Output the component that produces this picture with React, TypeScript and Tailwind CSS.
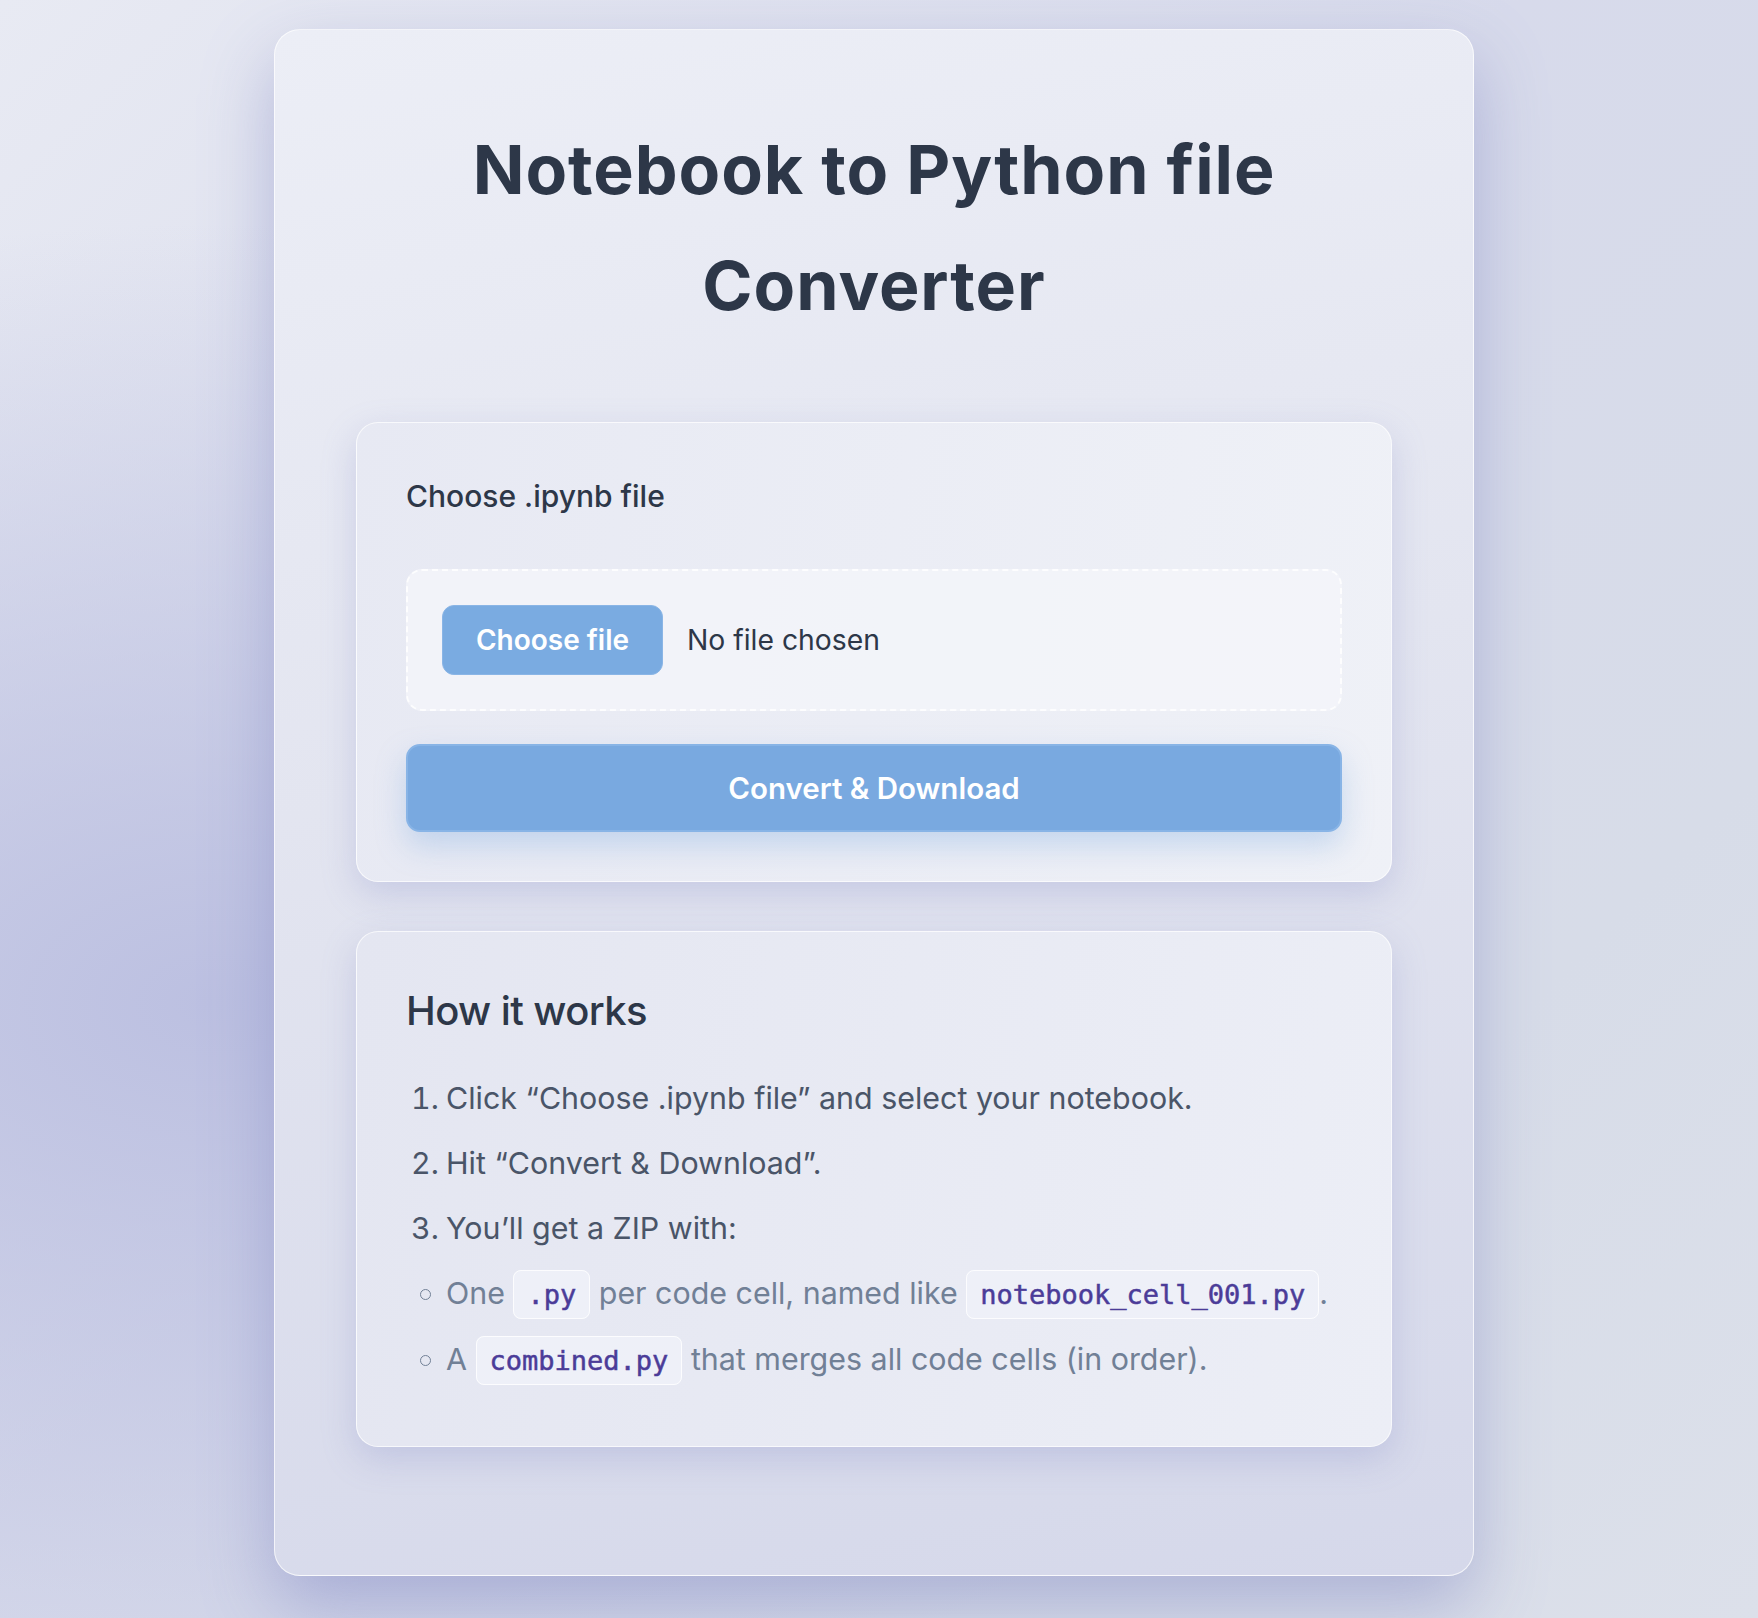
export default function App() {
  return (
    <div className="min-h-[1618px] bg-[radial-gradient(ellipse_at_12%_62%,#bcc0e1_0%,rgba(188,192,225,0)_55%),linear-gradient(135deg,#e8eaf3_0%,#d7daeb_45%,#d7dce8_75%,#dce0ea_100%)] pr-[10px] pt-[29px] pb-[40px] font-['Inter',sans-serif]">
      <main className="mx-auto w-[1200px] rounded-[26px] border border-white/70 bg-[linear-gradient(170deg,#eceef6_0%,#e3e5f0_45%,#d5d8ea_100%)] px-[81px] pt-[81px] pb-[79px] shadow-[0_30px_70px_rgba(120,126,190,0.45)]">
        <h1 className="text-center text-[68px] leading-[116px] font-bold tracking-[0.014em] text-[#2d3748]">
          Notebook to Python file Converter
        </h1>

        <UploadCard />
        <HowItWorks />
      </main>
    </div>
  );
}

function UploadCard() {
  return (
    <section className="mt-[79px] mb-[49px] rounded-[22px] border border-white/70 bg-[linear-gradient(100deg,#e7e9f3_0%,#eff1f7_100%)] p-[49px] shadow-[0_12px_34px_rgba(130,136,196,0.28)]">
      <label className="mb-[49px] block text-[30px] leading-[48px] font-medium text-[#2d3748]">
        Choose .ipynb file
      </label>

      <div className="flex items-center gap-[24px] rounded-[16px] border-2 border-dashed border-white/80 bg-[#f3f4f9]/90 p-[34px]">
        <span className="flex h-[70px] w-[221px] items-center justify-center rounded-[12px] border border-[#8ab5e6] bg-[#7aabe1] text-[28px] font-semibold text-white">
          Choose file
        </span>
        <span className="text-[28.3px] text-[#2d3748]">No file chosen</span>
      </div>

      <button className="mt-[33px] flex h-[88px] w-full items-center justify-center rounded-[14px] border-2 border-[#88b4e6] bg-[#79a9e0] text-[29.5px] font-semibold text-white shadow-[0_14px_30px_rgba(122,170,224,0.35)]">
        Convert &amp; Download
      </button>
    </section>
  );
}

function Code({ children }: { children: string }) {
  return (
    <code className="rounded-[8px] border border-white/80 bg-[#eef0f8] px-[13px] py-[8px] font-['DejaVu_Sans_Mono',monospace] text-[27px] text-[#4b3c98] [-webkit-text-stroke:0.5px_#4b3c98]">
      {children}
    </code>
  );
}

function HowItWorks() {
  const steps = [
    "Click “Choose .ipynb file” and select your notebook.",
    "Hit “Convert & Download”.",
    "You’ll get a ZIP with:",
  ];

  return (
    <section className="mb-[49px] rounded-[22px] border border-white/70 bg-[linear-gradient(100deg,#e4e6f1_0%,#eceef6_100%)] px-[49px] pt-[55px] pb-[53px] shadow-[0_12px_34px_rgba(130,136,196,0.28)]">
      <h2 className="mb-[31px] text-[40px] leading-[48px] font-medium tracking-[-0.015em] text-[#2d3748]">
        How it works
      </h2>

      <ol className="text-[30.4px] leading-[65px] text-[#4a5568]">
        {steps.map((step, index) => (
          <li key={index} className="flex">
            <span className="w-[40px] shrink-0 pl-[5px] tabular-nums">{index + 1}.</span>
            <span>{step}</span>
          </li>
        ))}
      </ol>

      <ul className="text-[30.4px] leading-[65px] text-[#718096]">
        <li className="flex items-baseline">
          <Bullet />
          <span>
            One <Code>.py</Code> per code cell, named like <Code>notebook_cell_001.py</Code>.
          </span>
        </li>
        <li className="flex items-baseline">
          <Bullet />
          <span>
            A <Code>combined.py</Code> that merges all code cells (in order).
          </span>
        </li>
      </ul>
    </section>
  );
}

function Bullet() {
  return (
    <span className="flex w-[40px] shrink-0 justify-end self-center pr-[15px]">
      <span className="h-[11px] w-[11px] rounded-full border-[1.5px] border-[#718096]" />
    </span>
  );
}
